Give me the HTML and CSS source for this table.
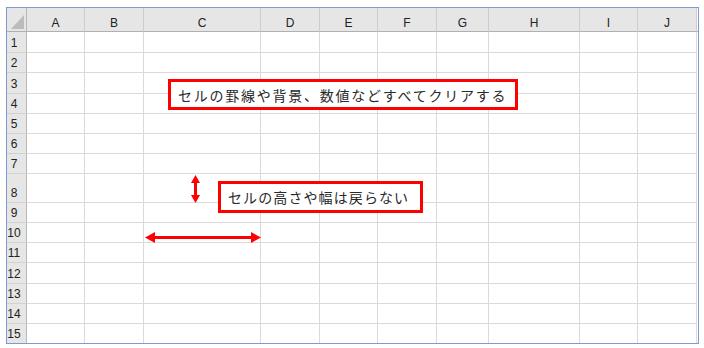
FILE: index.html
```html
<!DOCTYPE html>
<html lang="ja">
<head>
<meta charset="utf-8">
<title>Excel sheet</title>
<link rel="stylesheet" href="styles.css">
</head>
<body>
<div class="frame">
  <div class="sheet">
    <div class="corner"><div class="tri"></div></div>
    <div class="ch">A</div><div class="ch">B</div><div class="ch">C</div><div class="ch">D</div><div class="ch">E</div><div class="ch">F</div><div class="ch">G</div><div class="ch">H</div><div class="ch">I</div><div class="ch">J</div><div class="chf"></div>

    <div class="rh">1</div><div class="c"></div><div class="c"></div><div class="c"></div><div class="c"></div><div class="c"></div><div class="c"></div><div class="c"></div><div class="c"></div><div class="c"></div><div class="c"></div><div class="f"></div>
    <div class="rh">2</div><div class="c"></div><div class="c"></div><div class="c"></div><div class="c"></div><div class="c"></div><div class="c"></div><div class="c"></div><div class="c"></div><div class="c"></div><div class="c"></div><div class="f"></div>
    <div class="rh">3</div><div class="c"></div><div class="c"></div><div class="c"></div><div class="c"></div><div class="c"></div><div class="c"></div><div class="c"></div><div class="c"></div><div class="c"></div><div class="c"></div><div class="f"></div>
    <div class="rh">4</div><div class="c"></div><div class="c"></div><div class="c"></div><div class="c"></div><div class="c"></div><div class="c"></div><div class="c"></div><div class="c"></div><div class="c"></div><div class="c"></div><div class="f"></div>
    <div class="rh">5</div><div class="c"></div><div class="c"></div><div class="c"></div><div class="c"></div><div class="c"></div><div class="c"></div><div class="c"></div><div class="c"></div><div class="c"></div><div class="c"></div><div class="f"></div>
    <div class="rh">6</div><div class="c"></div><div class="c"></div><div class="c"></div><div class="c"></div><div class="c"></div><div class="c"></div><div class="c"></div><div class="c"></div><div class="c"></div><div class="c"></div><div class="f"></div>
    <div class="rh">7</div><div class="c"></div><div class="c"></div><div class="c"></div><div class="c"></div><div class="c"></div><div class="c"></div><div class="c"></div><div class="c"></div><div class="c"></div><div class="c"></div><div class="f"></div>
    <div class="rh">8</div><div class="c"></div><div class="c"></div><div class="c"></div><div class="c"></div><div class="c"></div><div class="c"></div><div class="c"></div><div class="c"></div><div class="c"></div><div class="c"></div><div class="f"></div>
    <div class="rh">9</div><div class="c"></div><div class="c"></div><div class="c"></div><div class="c"></div><div class="c"></div><div class="c"></div><div class="c"></div><div class="c"></div><div class="c"></div><div class="c"></div><div class="f"></div>
    <div class="rh">10</div><div class="c"></div><div class="c"></div><div class="c"></div><div class="c"></div><div class="c"></div><div class="c"></div><div class="c"></div><div class="c"></div><div class="c"></div><div class="c"></div><div class="f"></div>
    <div class="rh">11</div><div class="c"></div><div class="c"></div><div class="c"></div><div class="c"></div><div class="c"></div><div class="c"></div><div class="c"></div><div class="c"></div><div class="c"></div><div class="c"></div><div class="f"></div>
    <div class="rh">12</div><div class="c"></div><div class="c"></div><div class="c"></div><div class="c"></div><div class="c"></div><div class="c"></div><div class="c"></div><div class="c"></div><div class="c"></div><div class="c"></div><div class="f"></div>
    <div class="rh">13</div><div class="c"></div><div class="c"></div><div class="c"></div><div class="c"></div><div class="c"></div><div class="c"></div><div class="c"></div><div class="c"></div><div class="c"></div><div class="c"></div><div class="f"></div>
    <div class="rh">14</div><div class="c"></div><div class="c"></div><div class="c"></div><div class="c"></div><div class="c"></div><div class="c"></div><div class="c"></div><div class="c"></div><div class="c"></div><div class="c"></div><div class="f"></div>
    <div class="rh last">15</div><div class="c last"></div><div class="c last"></div><div class="c last"></div><div class="c last"></div><div class="c last"></div><div class="c last"></div><div class="c last"></div><div class="c last"></div><div class="c last"></div><div class="c last"></div><div class="f"></div>
  </div>

  <div class="note note-clear">セルの罫線や背景、数値などすべてクリアする</div>
  <div class="note note-size">セルの高さや幅は戻らない</div>

  <svg class="arrow arrow-v" width="9" height="28" viewBox="0 0 9 28">
    <polygon points="4.5,0 0,8 9,8" fill="#ff0000"/>
    <rect x="3" y="7" width="3" height="14" fill="#ff0000"/>
    <polygon points="4.5,28 0,20 9,20" fill="#ff0000"/>
  </svg>
  <svg class="arrow arrow-h" width="116" height="11" viewBox="0 0 116 11">
    <polygon points="0,5.5 10,0 10,11" fill="#ff0000"/>
    <rect x="9" y="4" width="98" height="3" fill="#ff0000"/>
    <polygon points="116,5.5 106,0 106,11" fill="#ff0000"/>
  </svg>
</div>
</body>
</html>
```

FILE: styles.css
```css
html, body {
  margin: 0;
  padding: 0;
  background: #ffffff;
}

body {
  padding: 7px 0 0 6px;
  font-family: "Liberation Sans", Arial, sans-serif;
}

.frame {
  position: relative;
  width: 691px;
  height: 335px;
  border: 1px solid #7a9bd3;
  background: #ffffff;
}

.sheet {
  display: grid;
  grid-template-columns: 20px 58px 59px 117px 59px 58px 59px 52px 91px 58px 59px 1px;
  grid-template-rows: 24px 21px 20px 21px 20px 20px 20px 20px 29px 20px 20px 20px 21px 20px 20px 19px;
}

.sheet > div {
  box-sizing: border-box;
}

.corner {
  background: #e6e6e6;
  border-right: 1px solid #b8b8b8;
  border-bottom: 1px solid #b0b0b0;
  display: flex;
  justify-content: flex-end;
  align-items: flex-end;
  padding: 0 2px 2px 0;
}

.tri {
  width: 13px;
  height: 14px;
  background: #bcbcbc;
  clip-path: polygon(100% 0, 100% 100%, 0 100%);
}

.ch {
  background: #e6e6e6;
  border-right: 1px solid #cdcdcd;
  border-bottom: 1px solid #b0b0b0;
  color: #222;
  font-size: 12px;
  line-height: 14px;
  padding-top: 8px;
  text-align: center;
}

.chf {
  background: #ffffff;
  border-bottom: 1px solid #b0b0b0;
}

.rh {
  background: #e6e6e6;
  border-right: 1px solid #b8b8b8;
  border-bottom: 1px solid #d2d2d2;
  color: #222;
  font-size: 12px;
  line-height: 14px;
  display: flex;
  align-items: flex-end;
  justify-content: center;
  padding: 0 5px 2px 0;
}

.c {
  border-right: 1px solid #dadada;
  border-bottom: 1px solid #dadada;
}

.rh.last, .c.last {
  border-bottom: none;
}

.f {
  background: #ffffff;
}

.note {
  position: absolute;
  box-sizing: border-box;
  border: 3px solid #ff0000;
  background: #ffffff;
  font-family: "Noto Sans CJK JP", "Noto Sans", sans-serif;
  font-size: 14px;
  letter-spacing: 1.75px;
  color: #2a2a2a;
  display: flex;
  align-items: center;
  padding-left: 7px;
  white-space: nowrap;
}

.note-clear {
  left: 161px;
  top: 71px;
  width: 350px;
  height: 31px;
}

.note-size {
  left: 211px;
  top: 173px;
  width: 205px;
  height: 32px;
  letter-spacing: 1.1px;
}

.arrow {
  position: absolute;
  display: block;
}

.arrow-v {
  left: 184px;
  top: 167px;
}

.arrow-h {
  left: 138px;
  top: 224px;
}
```
